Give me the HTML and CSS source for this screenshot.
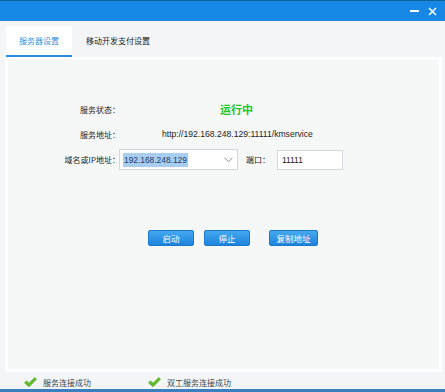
FILE: index.html
```html
<!DOCTYPE html>
<html lang="zh-CN">
<head>
<meta charset="UTF-8">
<title>服务器设置</title>
<link rel="stylesheet" href="styles.css">
</head>
<body>
<div class="window">
    <div class="titlebar">
        <span class="btn-min"></span>
        <svg class="btn-close" width="9" height="9" viewBox="0 0 9 9"><path d="M1 1L8 8M8 1L1 8" stroke="#fff" stroke-width="1.5"/></svg>
    </div>
    <div class="main">
        <div class="tabs">
            <div class="tab active">服务器设置</div>
            <div class="tab">移动开发支付设置</div>
        </div>
        <div class="panel">
            <div class="row row-status">
                <span class="label">服务状态：</span>
                <span class="running">运行中</span>
            </div>
            <div class="row row-addr">
                <span class="label">服务地址：</span>
                <span class="url">http://192.168.248.129:11111/kmservice</span>
            </div>
            <div class="row row-host">
                <span class="label">域名或IP地址：</span>
                <div class="combo">
                    <span class="sel">192.168.248.129</span>
                    <svg class="chev" width="9" height="6" viewBox="0 0 9 6"><path d="M0.5 0.8L4.5 4.8L8.5 0.8" fill="none" stroke="#8a8a8a" stroke-width="1"/></svg>
                </div>
                <span class="port-label">端口：</span>
                <div class="port">11111</div>
            </div>
            <div class="buttons">
                <button class="btn">启动</button>
                <button class="btn">停止</button>
                <button class="btn btn-wide">复制地址</button>
            </div>
        </div>
        <div class="statusbar">
            <span class="ok">
                <svg width="13" height="11" viewBox="0 0 13 11"><path d="M0.5 5.8L2.6 4L5 6.2L10.8 0.6L12.5 2.3L5 9.8Z" fill="#62be2c" stroke="#3f9a18" stroke-width="0.6"/></svg>
                服务连接成功
            </span>
            <span class="ok ok2">
                <svg width="13" height="11" viewBox="0 0 13 11"><path d="M0.5 5.8L2.6 4L5 6.2L10.8 0.6L12.5 2.3L5 9.8Z" fill="#62be2c" stroke="#3f9a18" stroke-width="0.6"/></svg>
                双工服务连接成功
            </span>
        </div>
    </div>
</div>
</body>
</html>
```

FILE: styles.css
```css
body {
    margin: 0;
    padding: 0;
    font-family: "Noto Sans CJK SC", "Liberation Sans", sans-serif;
    font-size: 8px;
    color: #222;
    background-color: #f3f5f6;
}
.window {
    width: 445px;
    height: 392px;
    overflow: hidden;
    display: flex;
    flex-direction: column;
}
.titlebar {
    height: 20px;
    flex-shrink: 0;
    background-color: #1888e6;
    border-top: 1px solid #10609e;
    display: flex;
    align-items: center;
    justify-content: flex-end;
    gap: 9px;
    padding-right: 8px;
}
.btn-min {
    width: 9px;
    height: 2px;
    background-color: #fff;
}
.main {
    flex: 1;
    display: flex;
    flex-direction: column;
    background-color: #f3f5f6;
    border-bottom: 3px solid #3a7fc0;
}
.tabs {
    display: flex;
    height: 31px;
    padding: 5px 0 0 6px;
    flex-shrink: 0;
}
.tab {
    display: flex;
    align-items: center;
    justify-content: center;
    padding: 0 14px;
    height: 29px;
    border-bottom: 2px solid transparent;
    white-space: nowrap;
}
.tab.active {
    padding: 0 13px;
    background-color: #fff;
    color: #3a8fd8;
    border-bottom-color: #2a8be0;
}
.panel {
    height: 309px;
    flex-shrink: 0;
    margin: 0 3px 0 5px;
    background-color: #f6f8f8;
    border: 3px solid #fff;
    display: flex;
    flex-direction: column;
}
.row {
    display: flex;
    align-items: center;
}
.label {
    width: 112px;
    text-align: right;
}
.row-status {
    margin-top: 39px;
    height: 20px;
}
.running {
    margin-left: 100px;
    font-size: 11px;
    font-weight: bold;
    color: #22c51f;
}
.row-addr {
    margin-top: 5px;
    height: 20px;
}
.url {
    margin-left: 42px;
    font-family: "Liberation Sans", sans-serif;
    font-size: 8.6px;
}
.row-host {
    margin-top: 5px;
    height: 21px;
}
.combo {
    width: 110px;
    height: 19px;
    margin-left: -1px;
    background-color: #fff;
    border: 1px solid #d4d8dc;
    display: flex;
    align-items: center;
    justify-content: space-between;
    padding: 0 4px 0 3px;
}
.sel {
    background-color: #a9cdef;
    color: #1a3f73;
    padding: 0 1px;
    font-family: "Liberation Sans", sans-serif;
    font-size: 8.4px;
    line-height: 14px;
}
.port-label {
    margin-left: 8px;
    width: 31px;
}
.port {
    width: 60px;
    height: 18px;
    background-color: #fff;
    border: 1px solid #d4d8dc;
    display: flex;
    align-items: center;
    padding-left: 4px;
    font-family: "Liberation Sans", sans-serif;
    font-size: 8.4px;
}
.buttons {
    display: flex;
    margin: 60px 0 0 140px;
    gap: 10px;
}
.btn {
    width: 46px;
    height: 16px;
    padding: 0;
    font-family: "Noto Sans CJK SC", sans-serif;
    font-size: 8.5px;
    color: #fff;
    background: linear-gradient(#45a8f0, #1c84dc);
    border: 1px solid #1a78cc;
    border-radius: 2px;
    line-height: 14px;
}
.btn-wide {
    width: 49px;
    margin-left: 9px;
}
.statusbar {
    flex: 1;
    display: flex;
    align-items: center;
    padding: 4px 0 0 24px;
}
.ok {
    display: flex;
    align-items: center;
    gap: 6px;
    color: #444;
}
.ok2 {
    margin-left: 57px;
}
```
